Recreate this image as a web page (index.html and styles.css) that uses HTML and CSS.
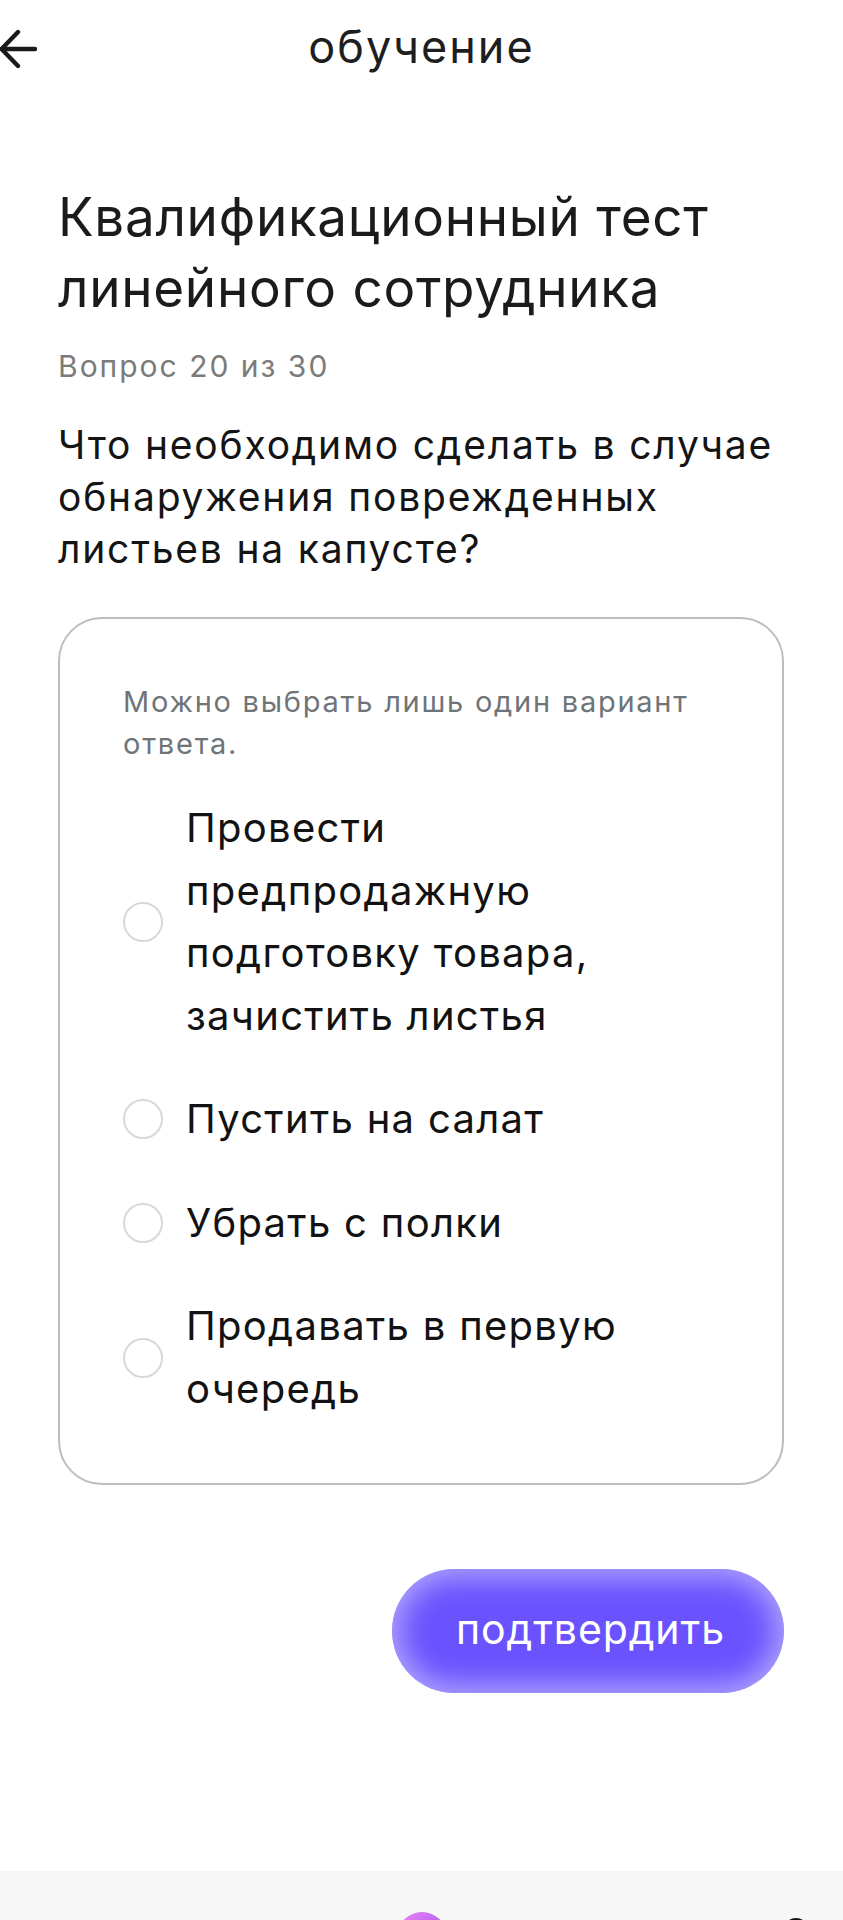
FILE: index.html
```html
<!DOCTYPE html>
<html lang="ru">
<head>
<meta charset="utf-8">
<title>обучение</title>
<link rel="stylesheet" href="styles.css">
</head>
<body>
<div class="page">
  <header class="topbar">
    <button class="back" aria-label="Назад">
      <svg width="40" height="40" viewBox="0 0 40 40" fill="none" stroke="#1a1a1a" stroke-width="4.4" stroke-linecap="round" stroke-linejoin="round">
        <path d="M35 20H2"/>
        <path d="M18 3L1.5 20L18 37"/>
      </svg>
    </button>
    <div class="topbar-title">обучение</div>
    <div class="topbar-spacer"></div>
  </header>

  <main class="content">
    <h1 class="test-title">Квалификационный тест линейного сотрудника</h1>
    <div class="progress">Вопрос 20 из 30</div>
    <p class="question">Что необходимо сделать в случае обнаружения поврежденных листьев на капусте?</p>

    <section class="card">
      <p class="hint">Можно выбрать лишь один вариант ответа.</p>
      <ul class="options">
        <li class="option"><span class="radio"></span><span class="option-text">Провести предпродажную подготовку товара, зачистить листья</span></li>
        <li class="option"><span class="radio"></span><span class="option-text">Пустить на салат</span></li>
        <li class="option"><span class="radio"></span><span class="option-text">Убрать с полки</span></li>
        <li class="option"><span class="radio"></span><span class="option-text">Продавать в первую очередь</span></li>
      </ul>
    </section>

    <div class="actions">
      <button class="confirm">подтвердить</button>
    </div>
  </main>

  <nav class="tabbar">
    <span class="tab-orb"></span>
    <span class="tab-icon"></span>
  </nav>
</div>
</body>
</html>
```
FILE: styles.css
```css
* { box-sizing: border-box; }
html, body {
  margin: 0;
  padding: 0;
  background: #ffffff;
}
body {
  font-family: "Inter", "Noto Sans", sans-serif;
  color: #1b1b1b;
  width: 843px;
}
.page {
  width: 843px;
  height: 1920px;
  display: flex;
  flex-direction: column;
  overflow: hidden;
}
.topbar {
  height: 98px;
  display: grid;
  grid-template-columns: 1fr auto 1fr;
  align-items: center;
}
.back {
  width: 40px;
  height: 40px;
  padding: 0;
  margin: 0;
  border: 0;
  background: transparent;
  display: block;
}
.back svg { display: block; }
.topbar-title {
  font-size: 45px;
  letter-spacing: 2px;
  line-height: 1;
  color: #1e1e1e;
  padding-bottom: 6px;
}
.content {
  padding: 0 59px 0 58px;
}
.test-title {
  margin: 84px 0 0;
  font-size: 53px;
  letter-spacing: 0.7px;
  font-weight: 400;
  line-height: 71px;
  color: #1b1b1b;
}
.progress {
  margin-top: 24px;
  font-size: 30px;
  letter-spacing: 2px;
  line-height: 36px;
  color: #7b7b7b;
}
.question {
  margin: 35px 0 0;
  font-size: 39px;
  letter-spacing: 1.8px;
  line-height: 52px;
  color: #141414;
}
.card {
  margin-top: 42px;
  border: 2px solid #babec2;
  border-radius: 44px;
  padding: 62px 63px 63px 63px;
}
.hint {
  margin: 0;
  font-size: 29px;
  letter-spacing: 1.75px;
  line-height: 42px;
  color: #6f7479;
}
.options {
  list-style: none;
  margin: 32px 0 0;
  padding: 0;
  display: flex;
  flex-direction: column;
  gap: 41px;
}
.option {
  display: flex;
  align-items: center;
  gap: 23px;
}
.radio {
  flex: none;
  width: 40px;
  height: 40px;
  border-radius: 50%;
  border: 2px solid #d8d8d8;
  background: #fff;
}
.option-text {
  max-width: 500px;
  font-size: 40px;
  letter-spacing: 1.3px;
  line-height: 62.5px;
  color: #121212;
}
.actions {
  margin-top: 84px;
  display: flex;
  justify-content: flex-end;
}
.confirm {
  width: 392px;
  height: 124px;
  border: 0;
  border-radius: 62px;
  background: #6a53fe;
  box-shadow: inset 0 0 28px 8px rgba(255, 255, 255, 0.48);
  color: #ffffff;
  font-family: "Inter", "Noto Sans", sans-serif;
  font-size: 41px;
  letter-spacing: 0.9px;
  line-height: 1;
  padding: 0 0 4px 5px;
}
.tabbar {
  margin-top: auto;
  height: 49px;
  background: #f7f7f7;
  display: flex;
  align-items: flex-start;
  padding: 41px 0 0 397px;
  overflow: hidden;
}
.tab-orb {
  flex: none;
  width: 50px;
  height: 50px;
  border-radius: 50%;
  background: linear-gradient(135deg, #e886f7 0%, #c466f2 50%, #a64ef0 100%);
}
.tab-icon {
  flex: none;
  margin: 6px 0 0 336px;
  width: 26px;
  height: 26px;
  border-radius: 50%;
  border: 3px solid #111;
}
```
